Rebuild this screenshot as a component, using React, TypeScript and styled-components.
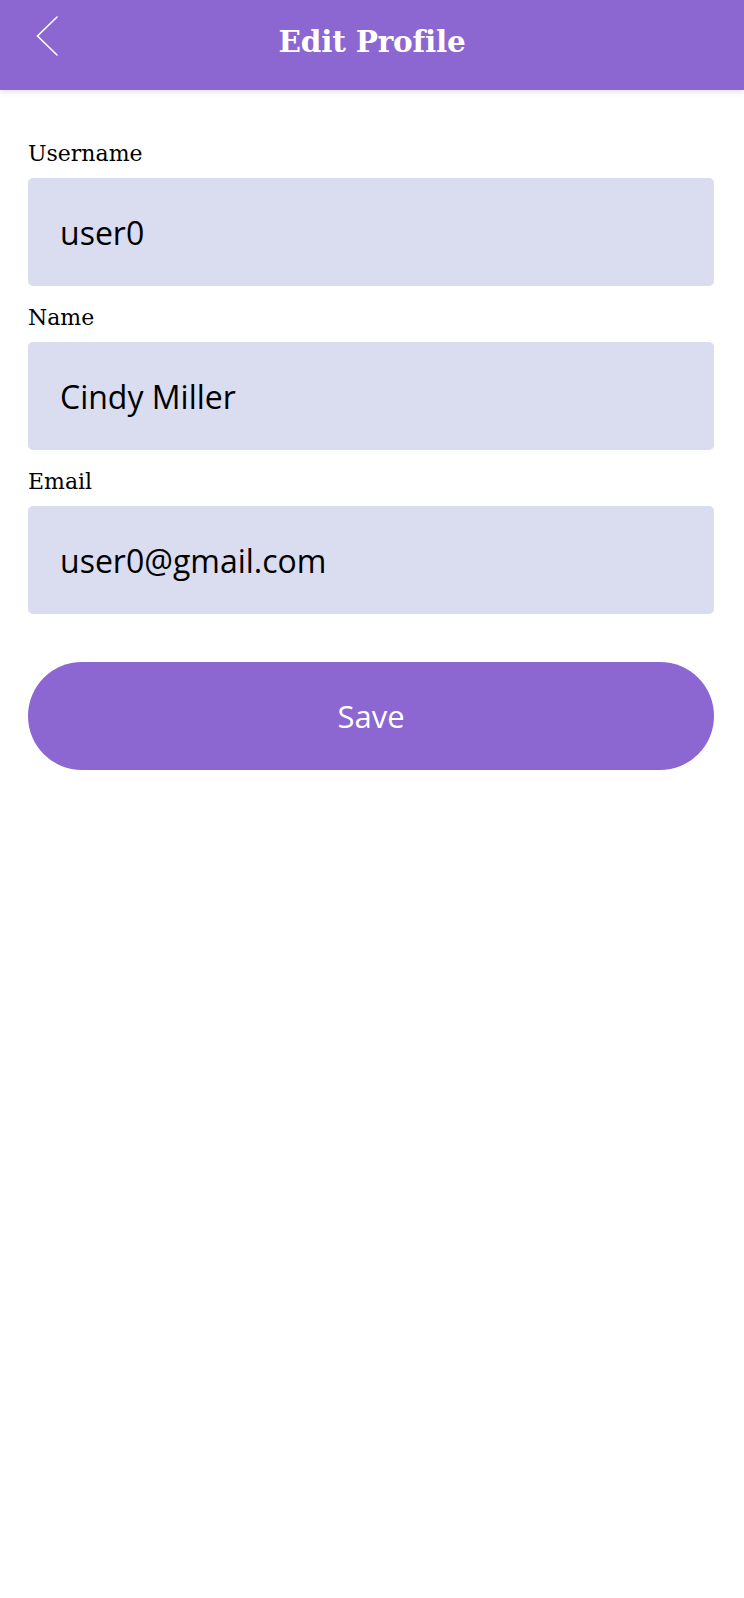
import React from "react";
import styled, { createGlobalStyle } from "styled-components";

const GlobalStyle = createGlobalStyle`
  html, body {
    margin: 0;
    padding: 0;
    background: #ffffff;
  }
  * { box-sizing: border-box; }
`;

const Page = styled.div`
  min-height: 1598px;
  background: #ffffff;
`;

const Header = styled.header`
  height: 90px;
  background: #8c66d1;
  box-shadow: 0 2px 6px rgba(0, 0, 0, 0.12);
  display: grid;
  grid-template-columns: 1fr auto 1fr;
  align-items: start;
  padding-top: 16px;
  position: relative;
  z-index: 1;
`;

const BackButton = styled.button`
  justify-self: start;
  margin-left: 36px;
  width: 22px;
  height: 40px;
  padding: 0;
  border: none;
  background: transparent;
  cursor: pointer;
  display: flex;
`;

const Title = styled.h1`
  margin: 9px 0 0;
  font-family: "DejaVu Serif", "Liberation Serif", serif;
  font-weight: 700;
  font-size: 29.5px;
  line-height: 34px;
  color: #ffffff;
  letter-spacing: -0.2px;
`;

const Form = styled.form`
  display: flex;
  flex-direction: column;
  padding: 52px 30px 0 28px;
`;

const Field = styled.div`
  display: flex;
  flex-direction: column;
  margin-bottom: 20px;
  &:last-of-type {
    margin-bottom: 0;
  }
`;

const Label = styled.label`
  font-family: "DejaVu Serif", "Liberation Serif", serif;
  font-size: 22px;
  line-height: 24px;
  color: #000000;
  margin-bottom: 12px;
`;

const Input = styled.input`
  height: 108px;
  width: 100%;
  border: none;
  outline: none;
  border-radius: 5px;
  background: #dadcf0;
  padding: 0 32px;
  font-family: "Open Sans", "Noto Sans", sans-serif;
  font-size: 32px;
  color: #000000;
`;

const SaveButton = styled.button`
  margin-top: 48px;
  height: 108px;
  width: 100%;
  border: none;
  border-radius: 54px;
  background: #8c66d1;
  color: #ffffff;
  font-family: "Open Sans", "Noto Sans", sans-serif;
  font-size: 31px;
  cursor: pointer;
`;

const fields = [
  { id: "username", label: "Username", value: "user0" },
  { id: "name", label: "Name", value: "Cindy Miller" },
  { id: "email", label: "Email", value: "user0@gmail.com" },
];

export default function App() {
  return (
    <Page>
      <GlobalStyle />
      <Header>
        <BackButton type="button" aria-label="Back">
          <svg width="22" height="40" viewBox="0 0 22 40" fill="none">
            <polyline
              points="21,1 1.5,20 21,39"
              stroke="#ffffff"
              strokeWidth="1.6"
              strokeLinecap="round"
              strokeLinejoin="miter"
            />
          </svg>
        </BackButton>
        <Title>Edit Profile</Title>
        <div />
      </Header>
      <Form onSubmit={(e) => e.preventDefault()}>
        {fields.map((f) => (
          <Field key={f.id}>
            <Label htmlFor={f.id}>{f.label}</Label>
            <Input id={f.id} defaultValue={f.value} />
          </Field>
        ))}
        <SaveButton type="submit">Save</SaveButton>
      </Form>
    </Page>
  );
}
